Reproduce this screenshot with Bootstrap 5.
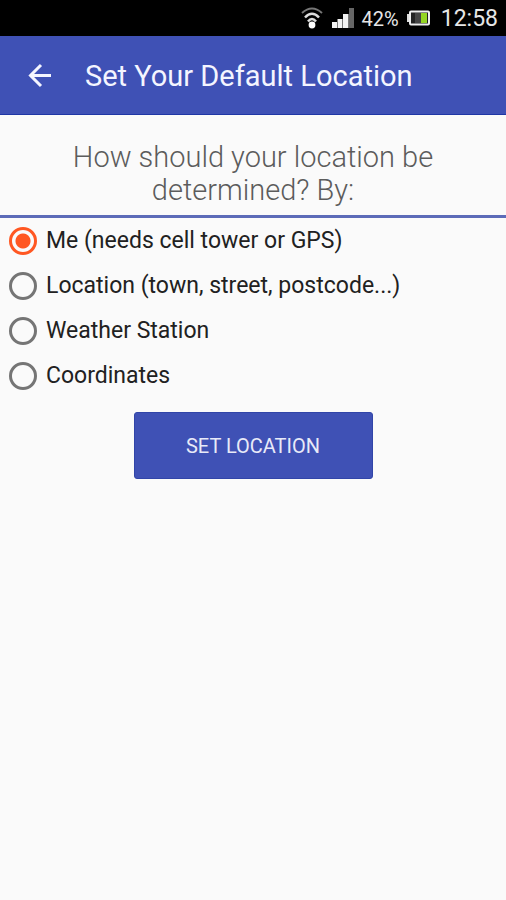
<!DOCTYPE html>
<html lang="en">
<head>
<meta charset="utf-8">
<meta name="viewport" content="width=device-width, initial-scale=1">
<title>Set Your Default Location</title>
<link href="https://cdn.jsdelivr.net/npm/bootstrap@5.3.0/dist/css/bootstrap.min.css" rel="stylesheet">
<style>
  body { font-family: Roboto, sans-serif; background: #fafafa; color: #212121; }
  .status { height: 36px; background: #000; color: #e6e6e6; padding-right: 8px; }
  .status-battery { font-size: 20px; line-height: 34px; padding-top: 2px; margin: 0 8px 0 7px; }
  .status-clock { font-size: 23px; line-height: 34px; padding-top: 2px; margin-left: 11px; }
  .app-bar { height: 79px; background: #3f51b5; color: #f4f5ff; border-bottom: 1px solid #1f36a5; padding: 0 24px; }
  .back-btn { color: inherit; line-height: 0; margin-right: 30px; }
  .app-title { font-size: 29px; line-height: 36px; padding-top: 2px; font-weight: 400; }
  .question { font-size: 29px; line-height: 33px; font-weight: 300; color: #5c5c5c; border-bottom: 3px solid #5c6bb8; padding: 26px 48px 8px; }
  .choice { height: 45px; padding-left: 9px; gap: 9px; }
  .choice-input { appearance: none; width: 28px; height: 28px; margin: 0; border: 3px solid #757575; border-radius: 50%; flex: none; }
  .choice-input:checked { border-color: #ff5722; background: radial-gradient(circle, #ff5722 7px, transparent 8px); }
  .choice-label { font-size: 23px; line-height: 30px; }
  .set-area { padding-top: 14px; }
  .set-btn { width: 239px; height: 67px; background: #3f51b5; color: #e8eaf8; font-size: 20px; border: 1px solid #3145a8; border-radius: 3px; }
  .set-btn:hover, .back-btn:hover { background: #3949ab; color: #fff; }
</style>
</head>
<body>
<div class="status d-flex align-items-center justify-content-end">
  <svg width="22" height="22" viewBox="0 0 22 22" fill="none" stroke="#ddd" stroke-width="2" aria-label="Wi-Fi">
    <path d="M1 6Q11-3 21 6" stroke="#777"/><path d="M4 10.500Q11 3 18 10.500" stroke-width="2.500"/><path d="M7 14.500Q11 9.500 15 14.500" stroke-width="2.500"/><circle cx="11" cy="18" r="3.400" fill="#fff" stroke="none"/>
  </svg>
  <svg class="ms-2" width="24" height="20" viewBox="0 0 24 20" fill="#f2f2f2" aria-label="Signal">
    <path d="M1 14h5v6H1zM6.500 11h5v9h-5zM12 6h5.500v14H12z"/><path d="M18 0h5v20h-5z" fill="#666"/>
  </svg>
  <span class="status-battery">42%</span>
  <svg width="23" height="16" viewBox="0 0 23 16" aria-label="Battery">
    <path d="M0 4h3v8H0z" fill="#ddd"/><rect x="3" y="1.500" width="19" height="13" rx="1" fill="#222" stroke="#eee" stroke-width="2"/><path d="M8 3h6v10H8z" fill="#444"/><path d="M14 3h6v10h-6z" fill="#94d522"/>
  </svg>
  <span class="status-clock">12:58</span>
</div>
<header class="app-bar d-flex align-items-center">
  <button class="back-btn btn border-0 p-0" type="button" aria-label="Back">
    <svg width="31" height="31" viewBox="0 0 31 31" fill="none" stroke="currentColor" stroke-width="3"><path d="M27 15.500H7M17 5L6.500 15.500L17 26"/></svg>
  </button>
  <h1 class="app-title mb-0 text-nowrap">Set Your Default Location</h1>
</header>
<main>
  <form>
    <h2 class="question text-center mb-0" id="question">How should your location be determined? By:</h2>
    <div role="radiogroup" aria-labelledby="question">
      <div class="choice d-flex align-items-center"><input class="choice-input" type="radio" name="method" id="me" checked><label class="choice-label" for="me">Me (needs cell tower or GPS)</label></div>
      <div class="choice d-flex align-items-center"><input class="choice-input" type="radio" name="method" id="place"><label class="choice-label" for="place">Location (town, street, postcode...)</label></div>
      <div class="choice d-flex align-items-center"><input class="choice-input" type="radio" name="method" id="station"><label class="choice-label" for="station">Weather Station</label></div>
      <div class="choice d-flex align-items-center"><input class="choice-input" type="radio" name="method" id="coords"><label class="choice-label" for="coords">Coordinates</label></div>
    </div>
    <div class="set-area d-flex justify-content-center"><button class="set-btn btn" type="button">SET LOCATION</button></div>
  </form>
</main>
<script src="https://cdn.jsdelivr.net/npm/bootstrap@5.3.0/dist/js/bootstrap.bundle.min.js"></script>
</body>
</html>
